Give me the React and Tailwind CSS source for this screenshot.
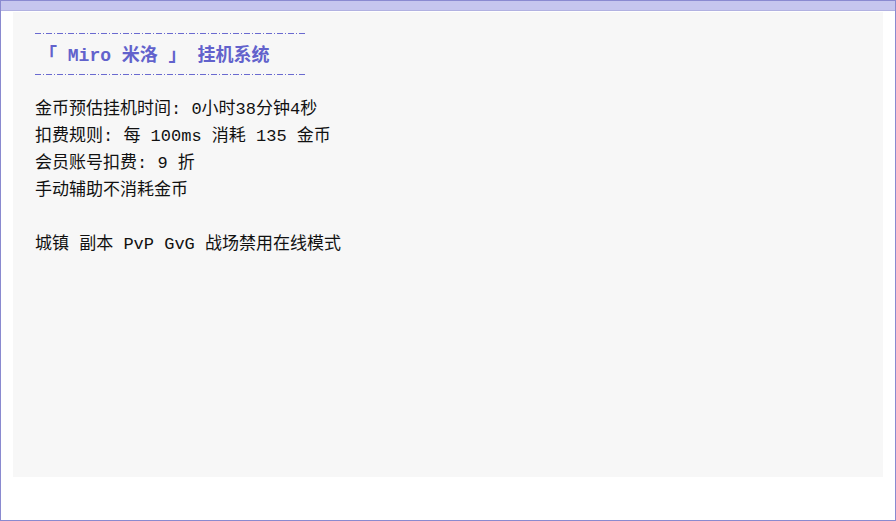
import React from 'react';

const FONT = { fontFamily: '"Liberation Mono", "Noto Sans CJK SC", monospace' };

function DashLine() {
  return (
    <svg width="270" height="3" className="block">
      <line x1="0" y1="1.5" x2="270" y2="1.5" stroke="#6a6ad0" strokeWidth="1.2" strokeDasharray="6 2 1 2" />
    </svg>
  );
}

const LINES = [
  '金币预估挂机时间: 0小时38分钟4秒',
  '扣费规则: 每 100ms 消耗 135 金币',
  '会员账号扣费: 9 折',
  '手动辅助不消耗金币',
  '',
  '城镇 副本 PvP GvG 战场禁用在线模式',
];

export default function App() {
  return (
    <div className="w-[896px] h-[521px] bg-white border border-[#8a8ad0] flex flex-col overflow-hidden" style={FONT}>
      <div className="h-[10px] bg-[#c6c6ee] border-b border-[#b2b2e2] shrink-0" />
      <div className="flex-1 px-3 pt-px pb-[43px]">
        <div className="h-full bg-[#f7f7f7] pl-[22px] pt-[20px]">
          <DashLine />
          <div className="h-[38px] flex items-center pl-[4px] pt-[4px] text-[18px] font-bold text-[#6262cc]">
            「 Miro 米洛 」 挂机系统
          </div>
          <DashLine />
          <div className="mt-[20px] text-[17px] leading-[27px] text-[#111]">
            {LINES.map((l, i) => (
              <div key={i} className="h-[27px] whitespace-pre">{l}</div>
            ))}
          </div>
        </div>
      </div>
    </div>
  );
}
